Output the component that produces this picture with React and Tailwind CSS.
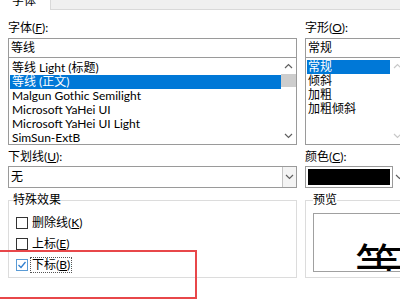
import React from 'react'

const FONT = { fontFamily: 'Lato, "Noto Sans CJK SC", sans-serif' }

const fontList = [
  '等线 Light (标题)',
  '等线 (正文)',
  'Malgun Gothic Semilight',
  'Microsoft YaHei UI',
  'Microsoft YaHei UI Light',
  'SimSun-ExtB',
]

const styleList = ['常规', '倾斜', '加粗', '加粗倾斜']

function Chevron({ up, color = '#606060' }) {
  return (
    <svg width="9" height="6" viewBox="0 0 9 6">
      <path d={up ? 'M1 5 L4.5 1.5 L8 5' : 'M1 1 L4.5 4.5 L8 1'} fill="none" stroke={color} strokeWidth="1.2" />
    </svg>
  )
}

function Label({ text, keyChar, className = '' }) {
  return (
    <div className={`h-[16px] leading-[16px] text-[12px] text-black ${className}`}>
      {text}(<span className="underline">{keyChar}</span>):
    </div>
  )
}

function Checkbox({ label, keyChar, checked, focused }) {
  return (
    <div className="flex items-center h-[21px] gap-[2px]">
      <div
        className={`w-[12px] h-[12px] border flex items-center justify-center bg-white ${checked ? 'border-[#5a9bd5]' : 'border-[#333333]'}`}
      >
        {checked && (
          <svg width="10" height="10" viewBox="0 0 10 10">
            <path d="M1.5 5 L4 7.5 L8.5 2" fill="none" stroke="#2f7fd0" strokeWidth="1.3" />
          </svg>
        )}
      </div>
      <span
        className={`text-[12px] leading-[14px] px-[1px] ${focused ? 'border border-dotted border-[#555]' : 'border border-transparent'}`}
      >
        {label}(<span className="underline">{keyChar}</span>)
      </span>
    </div>
  )
}

export default function App() {
  return (
    <div className="relative w-[400px] h-[300px] overflow-hidden bg-white text-black" style={FONT}>
      {/* tab strip */}
      <div className="flex h-[10px]">
        <div className="w-[51px] h-[10px] bg-white border-r border-[#d9d9d9] relative overflow-hidden">
          <span className="absolute left-[12px] top-[-6px] text-[12px] leading-[14px]">字体</span>
        </div>
        <div className="flex-1 bg-[#f0f0f0] border-b border-[#d9d9d9]" />
      </div>

      <div className="flex gap-[8px] pl-[8px] pt-[10px]">
        {/* left column */}
        <div className="w-[289px] shrink-0 flex flex-col">
          <Label text="字体" keyChar="F" />
          <div className="mt-[2px] h-[20px] border border-[#9a9a9a] px-[2px] text-[12px] leading-[18px]">等线</div>
          <div className="h-[87px] border border-t-0 border-[#9a9a9a] flex">
            <div className="flex-1 pt-[3px] pl-[1px]">
              {fontList.map((f, i) => (
                <div
                  key={f}
                  className={`h-[14px] leading-[14px] text-[12px] pl-[2px] ${i === 1 ? 'bg-[#0078d7] text-white' : ''}`}
                >
                  {f}
                </div>
              ))}
            </div>
            <div className="w-[15px] flex flex-col items-center">
              <div className="h-[16px] flex items-center justify-center">
                <Chevron up />
              </div>
              <div className="w-[15px] h-[13px] bg-[#cdcdcd]" />
              <div className="flex-1" />
              <div className="h-[16px] flex items-center justify-center">
                <Chevron />
              </div>
            </div>
          </div>

          <Label text="下划线" keyChar="U" className="mt-[4px]" />
          <div className="mt-[1px] h-[22px] border border-[#9a9a9a] flex">
            <div className="flex-1 px-[2px] text-[12px] leading-[20px]">无</div>
            <div className="w-[14px] border-l border-[#c4c4c4] bg-[#f4f4f4] flex items-center justify-center">
              <Chevron />
            </div>
          </div>

          <fieldset className="mt-[5px] h-[85px] border border-[#dcdcdc]">
            <legend className="ml-[4px] text-[12px] leading-[14px]">特殊效果</legend>
            <div className="mt-[5px] pl-[7px] flex flex-col">
              <Checkbox label="删除线" keyChar="K" />
              <Checkbox label="上标" keyChar="E" />
              <Checkbox label="下标" keyChar="B" checked focused />
            </div>
          </fieldset>
        </div>

        {/* right column */}
        <div className="w-[100px] shrink-0 flex flex-col">
          <Label text="字形" keyChar="O" />
          <div className="mt-[2px] h-[20px] border border-[#9a9a9a] px-[2px] text-[12px] leading-[18px]">常规</div>
          <div className="h-[87px] border border-t-0 border-[#9a9a9a] flex">
            <div className="w-[84px] pt-[2px] pl-[1px]">
              {styleList.map((s, i) => (
                <div
                  key={s}
                  className={`h-[14px] leading-[14px] text-[12px] pl-[1px] ${i === 0 ? 'bg-[#0078d7] text-white' : ''}`}
                >
                  {s}
                </div>
              ))}
            </div>
            <div className="flex-1 flex flex-col items-center">
              <div className="h-[16px] flex items-center justify-center">
                <Chevron up color="#c8c8c8" />
              </div>
              <div className="flex-1" />
              <div className="h-[16px] flex items-center justify-center">
                <Chevron color="#c8c8c8" />
              </div>
            </div>
          </div>

          <Label text="颜色" keyChar="C" className="mt-[4px]" />
          <div className="mt-[1px] h-[22px] flex">
            <div className="w-[88px] border border-[#9a9a9a] p-[2px]">
              <div className="w-full h-full bg-black" />
            </div>
            <div className="flex-1 flex items-center justify-center">
              <Chevron />
            </div>
          </div>

          <fieldset className="mt-[5px] h-[85px] border border-[#dcdcdc]">
            <legend className="ml-[7px] text-[12px] leading-[14px]">预览</legend>
            <div className="ml-[7px] mt-[6px] h-[59px] border border-[#a0a0a0] overflow-hidden">
              <div className="pl-[41px] pt-[28px] text-[48px] leading-[48px] whitespace-nowrap">等线</div>
            </div>
          </fieldset>
        </div>
      </div>

      {/* red highlight */}
      <div className="absolute left-[-2px] top-[250px] w-[199px] h-[49px] border-2 border-[#e8474a]" />
    </div>
  )
}
